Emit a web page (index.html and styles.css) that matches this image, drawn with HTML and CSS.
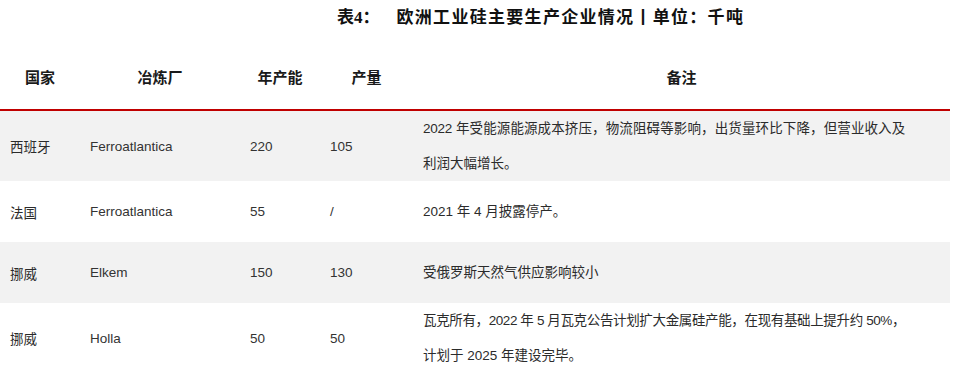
FILE: index.html
```html
<!DOCTYPE html>
<html lang="zh-CN">
<head>
<meta charset="utf-8">
<title>欧洲工业硅主要生产企业情况</title>
<link rel="stylesheet" href="styles.css">
</head>
<body>
<div class="title"><span class="title-no">表<span class="num">4</span>：</span>欧洲工业硅主要生产企业情况丨单位：千吨</div>
<div class="table">
  <div class="row head">
    <div class="cell">国家</div>
    <div class="cell">冶炼厂</div>
    <div class="cell">年产能</div>
    <div class="cell">产量</div>
    <div class="cell">备注</div>
  </div>
  <div class="row shade">
    <div class="cell">西班牙</div>
    <div class="cell latin">Ferroatlantica</div>
    <div class="cell latin">220</div>
    <div class="cell latin">105</div>
    <div class="cell note"><span class="jline">2022 年受能源能源成本挤压，物流阻碍等影响，出货量环比下降，但营业收入及</span><span class="line">利润大幅增长。</span></div>
  </div>
  <div class="row">
    <div class="cell">法国</div>
    <div class="cell latin">Ferroatlantica</div>
    <div class="cell latin">55</div>
    <div class="cell latin">/</div>
    <div class="cell note"><span class="line">2021 年 4 月披露停产。</span></div>
  </div>
  <div class="row shade">
    <div class="cell">挪威</div>
    <div class="cell latin">Elkem</div>
    <div class="cell latin">150</div>
    <div class="cell latin">130</div>
    <div class="cell note"><span class="line">受俄罗斯天然气供应影响较小</span></div>
  </div>
  <div class="row">
    <div class="cell">挪威</div>
    <div class="cell latin">Holla</div>
    <div class="cell latin">50</div>
    <div class="cell latin">50</div>
    <div class="cell note"><span class="jline tight">瓦克所有，2022 年 5 月瓦克公告计划扩大金属硅产能，在现有基础上提升约 50%，</span><span class="line">计划于 2025 年建设完毕。</span></div>
  </div>
</div>
</body>
</html>
```

FILE: styles.css
```css
* { box-sizing: border-box; }

body {
  margin: 0;
  background: #ffffff;
  font-family: "Liberation Sans", "Noto Sans CJK SC", sans-serif;
  color: #2b2b2b;
}

.title {
  padding: 8px 0 0 337px;
  height: 38px;
  font-size: 17px;
  line-height: 20px;
  font-weight: 700;
  letter-spacing: 1.3px;
  color: #111;
}

.title-no {
  margin-right: 17px;
  letter-spacing: 0;
}

.title-no .num {
  font-family: "Liberation Serif", serif;
}

.table {
  width: 950px;
}

.row {
  display: grid;
  grid-template-columns: 80px 160px 80px 93px 537px;
  align-items: center;
  min-height: 61px;
  font-size: 13.5px;
}

.row.shade {
  background: #f2f2f2;
}

.cell {
  padding-left: 10px;
}

.latin {
  font-size: 13.5px;
  color: #333;
}

.head {
  height: 73px;
  padding-top: 5px;
  border-bottom: 2px solid #c00000;
  font-size: 15px;
  font-weight: 700;
  color: #1a1a1a;
}

.head .cell {
  padding-left: 0;
  text-align: center;
}

.note {
  padding-right: 45px;
  line-height: 35px;
}

.note .line {
  display: block;
}

.note .jline {
  display: block;
  text-align: justify;
  text-align-last: justify;
  white-space: nowrap;
  letter-spacing: -0.25px;
}

.note .jline.tight {
  letter-spacing: -0.45px;
}
```
